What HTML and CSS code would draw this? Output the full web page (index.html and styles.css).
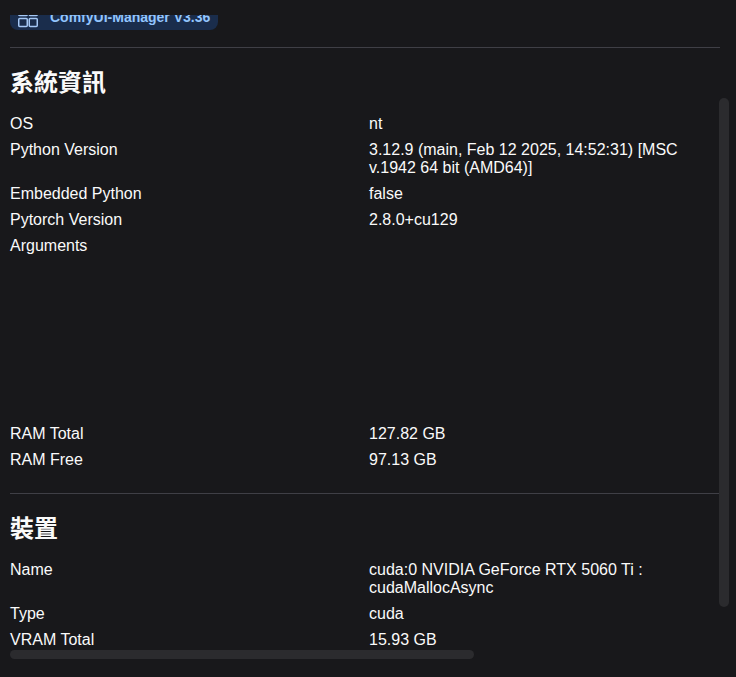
FILE: index.html
```html
<!DOCTYPE html>
<html lang="zh-Hant">
<head>
<meta charset="utf-8">
<title>系統資訊</title>
<link rel="stylesheet" href="styles.css">
</head>
<body>
<main class="panel">
  <div class="scroll">
    <div class="badge">
      <svg class="badge-icon" width="20" height="28" viewBox="0 0 20 28" fill="none" stroke="currentColor" stroke-width="1.5" aria-hidden="true">
        <rect x="0.75" y="2" width="8.5" height="7.5" rx="1"/>
        <rect x="11.25" y="2" width="8" height="7.5" rx="1"/>
        <rect x="0.75" y="12.5" width="8.5" height="8" rx="1"/>
        <rect x="11.25" y="12.5" width="8" height="8" rx="1"/>
      </svg>
      <span class="badge-text">ComfyUI-Manager V3.36</span>
    </div>
    <hr class="rule rule-top">
    <section>
      <h2>系統資訊</h2>
      <dl class="rows">
        <dt>OS</dt><dd>nt</dd>
        <dt>Python Version</dt><dd>3.12.9 (main, Feb 12 2025, 14:52:31) [MSC v.1942 64 bit (AMD64)]</dd>
        <dt>Embedded Python</dt><dd>false</dd>
        <dt>Pytorch Version</dt><dd>2.8.0+cu129</dd>
        <dt>Arguments</dt><dd class="args"></dd>
        <dt>RAM Total</dt><dd>127.82 GB</dd>
        <dt>RAM Free</dt><dd>97.13 GB</dd>
      </dl>
    </section>
    <hr class="rule rule-mid">
    <section>
      <h2>裝置</h2>
      <dl class="rows">
        <dt>Name</dt><dd>cuda:0 NVIDIA GeForce RTX 5060 Ti : cudaMallocAsync</dd>
        <dt>Type</dt><dd>cuda</dd>
        <dt>VRAM Total</dt><dd>15.93 GB</dd>
      </dl>
    </section>
  </div>
  <div class="bar bar-v"></div>
  <div class="bar bar-h"></div>
</main>
</body>
</html>
```
FILE: styles.css
```css
* { box-sizing: border-box; }
html, body {
  margin: 0;
  height: 100%;
  background: #18181b;
}
body {
  color: #fafafa;
  font-family: "Liberation Sans", "Noto Sans CJK TC", sans-serif;
  font-size: 16px;
  line-height: 18px;
  overflow: hidden;
}
.panel {
  position: relative;
  height: 677px;
  overflow: hidden;
}
.scroll {
  height: 650px;
  padding: 15px 16px 0 10px;
  overflow: hidden;
}
.badge {
  display: flex;
  align-items: flex-start;
  gap: 12px;
  width: 208px;
  height: 15px;
  padding-left: 8px;
  overflow: hidden;
  border-radius: 0 0 8px 8px;
  background: #1a2d4c;
  color: #93c5fd;
  font-size: 14px;
  font-weight: 700;
  white-space: nowrap;
}
.badge-icon { flex: none; margin-top: -9px; color: #a5c8f5; }
.badge-text { margin-top: -7px; }
.rule {
  height: 1px;
  margin: 0;
  border: 0;
  background: #3f3f46;
}
.rule-top { margin-top: 17px; }
.rule-mid { margin-top: 20px; }
h2 {
  margin: 0;
  padding-top: 18px;
  height: 63px;
  font-family: "Noto Sans CJK TC", sans-serif;
  font-size: 24px;
  line-height: 30px;
  font-weight: 700;
}
.rows {
  display: grid;
  grid-template-columns: 359px 1fr;
  margin: 0;
}
dt, dd {
  margin: 0;
  padding: 4px 0;
}
.args { height: 188px; }
.bar {
  position: absolute;
  background: #2b2b2e;
  border-radius: 5px;
}
.bar-v {
  left: 719px;
  top: 98px;
  width: 10px;
  height: 509px;
}
.bar-h {
  left: 10px;
  top: 650px;
  width: 464px;
  height: 9px;
}
```
